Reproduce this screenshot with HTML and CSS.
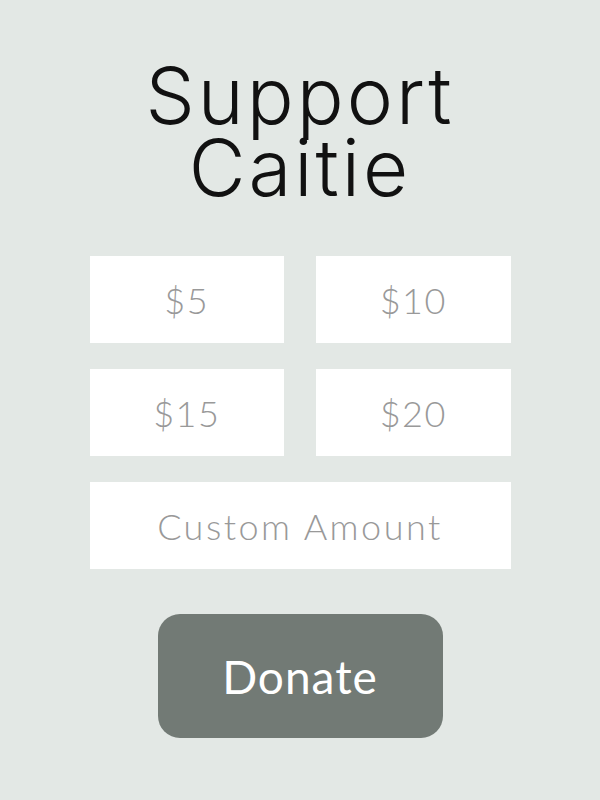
FILE: index.html
```html
<!DOCTYPE html>
<html lang="en">
<head>
    <meta charset="UTF-8">
    <meta name="viewport" content="width=device-width, initial-scale=1.0">
    <title>Support Caitie</title>
    <link rel="stylesheet" href="styles.css">
</head>
<body>

    <div class="container">
        <h1>Support<br>Caitie</h1>

        <!-- preset amounts -->
        <div class="amounts">
            <button type="button" class="amount">$5</button>
            <button type="button" class="amount">$10</button>
            <button type="button" class="amount">$15</button>
            <button type="button" class="amount">$20</button>
            <input type="text" class="custom" placeholder="Custom Amount">
        </div>

        <div class="donate-wrapper">
            <button type="button" class="donate">Donate</button>
        </div>
    </div>

</body>
</html>
```

FILE: styles.css
```css
body {
    font-family: Lato, "Open Sans", sans-serif;
    background-color: #e3e8e5;
    margin: 0;
    padding: 0;
}

.container {
    width: 421px;
    margin: 0 auto;
    padding-top: 60px;
}

h1 {
    font-family: Inter, "Liberation Sans", sans-serif;
    font-weight: 300;
    font-size: 78px;
    line-height: 72px;
    letter-spacing: 3px;
    text-align: center;
    color: #111;
    margin: 0 0 52px 0;
}

.amounts {
    display: grid;
    grid-template-columns: 1fr 1fr;
    column-gap: 32px;
    row-gap: 26px;
}

.amount, .custom {
    height: 87px;
    background-color: #fff;
    border: none;
    font-family: inherit;
    font-weight: 300;
    font-size: 36px;
    letter-spacing: 1.5px;
    color: #999;
    text-align: center;
    padding: 0;
    margin: 0;
}

.custom {
    grid-column: 1 / 3;
    width: 100%;
    box-sizing: border-box;
    letter-spacing: 2.5px;
}

.custom::placeholder {
    color: #999;
}

.donate-wrapper {
    display: flex;
    justify-content: center;
    margin-top: 45px;
}

.donate {
    width: 285px;
    height: 124px;
    background-color: #727a75;
    color: #fff;
    border: none;
    border-radius: 22px;
    font-family: inherit;
    font-size: 46px;
    letter-spacing: 1px;
    cursor: pointer;
}
```
